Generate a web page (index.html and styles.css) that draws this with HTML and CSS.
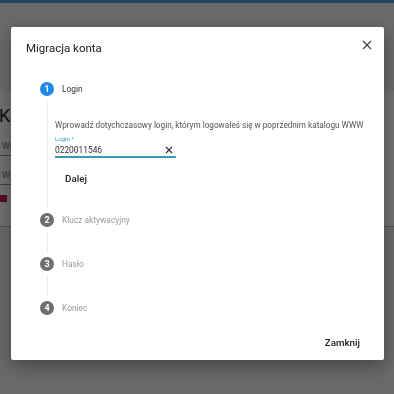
FILE: index.html
```html
<!DOCTYPE html>
<html lang="pl">
<head>
    <meta charset="UTF-8">
    <meta name="viewport" content="width=device-width, initial-scale=1.0">
    <title>Migracja konta</title>
    <link rel="stylesheet" href="styles.css">
</head>
<body>
    <div class="topbar"></div>

    <div class="page">
        <h1 class="page-title">Katalog</h1>
        <div class="page-input">Wpisz login</div>
        <div class="page-input">Wyszukaj</div>
        <div class="page-check"></div>
    </div>

    <div class="overlay">
        <div class="dialog">
            <div class="dialog-head">
                <h2 class="dialog-title">Migracja konta</h2>
                <button class="close-button" aria-label="Zamknij">
                    <svg width="10" height="10" viewBox="0 0 10 10">
                        <path d="M1 1 L9 9 M9 1 L1 9" stroke="#444" stroke-width="1.3" fill="none"/>
                    </svg>
                </button>
            </div>

            <div class="stepper">
                <div class="step-head">
                    <span class="step-num active">1</span>
                    <span class="step-label active">Login</span>
                </div>
                <div class="step-content">
                    <p class="step-text">Wprowadź dotychczasowy login, którym logowałeś się w poprzednim katalogu WWW</p>
                    <div class="field">
                        <label class="field-label">Login *</label>
                        <div class="field-row">
                            <span class="field-value">0220011546</span>
                            <svg width="8" height="8" viewBox="0 0 8 8">
                                <path d="M1 1 L7 7 M7 1 L1 7" stroke="#333" stroke-width="1.2" fill="none"/>
                            </svg>
                        </div>
                    </div>
                    <button class="text-button next-button">Dalej</button>
                </div>

                <div class="step-head">
                    <span class="step-num">2</span>
                    <span class="step-label">Klucz aktywacyjny</span>
                </div>
                <div class="step-line"></div>
                <div class="step-head">
                    <span class="step-num">3</span>
                    <span class="step-label">Hasło</span>
                </div>
                <div class="step-line"></div>
                <div class="step-head">
                    <span class="step-num">4</span>
                    <span class="step-label">Koniec</span>
                </div>
            </div>

            <div class="dialog-actions">
                <button class="text-button">Zamknij</button>
            </div>
        </div>
    </div>
</body>
</html>
```

FILE: styles.css
```css
body {
    margin: 0;
    font-family: 'Roboto', 'Liberation Sans', sans-serif;
    background: #efefef;
    color: #333333;
    height: 394px;
    overflow: hidden;
}

.topbar {
    height: 3px;
    background: #3fa3d8;
}

.page {
    background: #ffffff;
    margin-top: 88px;
    height: 135px;
    border-bottom: 1px solid #bbbbbb;
}

.page-title {
    margin: 0;
    padding-top: 14px;
    font-size: 18px;
    font-weight: 400;
    line-height: 22px;
    color: #222222;
    text-indent: -1px;
}

.page-input {
    margin-top: 10px;
    height: 18px;
    width: 120px;
    font-size: 9px;
    line-height: 18px;
    color: #777777;
    border-bottom: 1px solid #999999;
    padding-left: 2px;
    margin-bottom: 10px;
}

.page-check {
    width: 7px;
    height: 7px;
    background: #c2185b;
    margin-top: 2px;
}

.overlay {
    position: fixed;
    inset: 0;
    background: rgba(0, 0, 0, 0.56);
    display: flex;
    justify-content: center;
    align-items: flex-start;
    padding-top: 27px;
}

.dialog {
    width: 373px;
    height: 333px;
    background: #ffffff;
    border-radius: 2px;
    box-shadow: 0 6px 18px rgba(0, 0, 0, 0.35);
    display: flex;
    flex-direction: column;
    margin-left: 1px;
}

.dialog-head {
    display: flex;
    justify-content: space-between;
    align-items: center;
    padding: 13px 12px 0 15px;
}

.dialog-title {
    margin: 0;
    font-size: 11.5px;
    font-weight: 400;
    line-height: 16px;
    color: #222222;
}

.close-button {
    border: none;
    background: none;
    padding: 0;
    display: flex;
    margin-top: -6px;
}

.stepper {
    padding: 26px 0 0 29px;
    flex: 1;
}

.step-head {
    display: flex;
    align-items: center;
    gap: 8px;
    height: 14px;
}

.step-num {
    width: 14px;
    height: 14px;
    border-radius: 50%;
    background: #6f6f6f;
    color: #ffffff;
    font-size: 9px;
    font-weight: 700;
    display: flex;
    align-items: center;
    justify-content: center;
}

.step-num.active {
    background: #1e88e5;
}

.step-label {
    font-size: 8.4px;
    color: #9a9a9a;
}

.step-label.active {
    color: #333333;
}

.step-content {
    margin-left: 7px;
    border-left: 1px solid #e8e8e8;
    padding: 17px 0 16px 7px;
    margin-top: 6px;
    margin-bottom: 6px;
}

.step-text {
    margin: 0;
    font-size: 8.2px;
    line-height: 12px;
    color: #555555;
    white-space: nowrap;
}

.field {
    width: 121px;
    margin-top: 4px;
    border-bottom: 2px solid #3a95bf;
}

.field-label {
    display: block;
    font-size: 6px;
    line-height: 8px;
    color: #3f9bd5;
}

.field-row {
    display: flex;
    justify-content: space-between;
    align-items: center;
    padding-right: 3px;
    height: 13px;
}

.field-value {
    font-size: 8.4px;
    color: #333333;
}

.text-button {
    border: none;
    background: none;
    font-family: inherit;
    font-size: 9.8px;
    font-weight: 500;
    color: #222222;
    padding: 6px 10px;
    line-height: 12px;
}

.next-button {
    margin-top: 9px;
}

.step-line {
    width: 1px;
    height: 18px;
    background: #e8e8e8;
    margin: 6px 0 6px 7px;
}

.dialog-actions {
    display: flex;
    justify-content: flex-end;
    padding: 0 14px 5px 0;
}
```
